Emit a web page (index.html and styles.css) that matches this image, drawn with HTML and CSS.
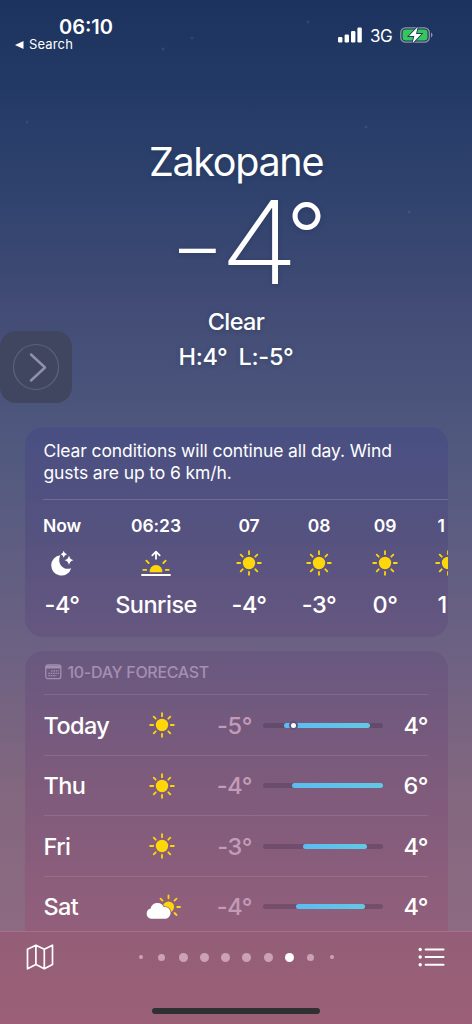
FILE: index.html
```html
<!DOCTYPE html>
<html lang="en">
<head>
<meta charset="utf-8">
<title>Weather</title>
<link rel="stylesheet" href="styles.css">
</head>
<body>
<svg class="defs" width="0" height="0" aria-hidden="true">
  <defs>
    <symbol id="sun" viewBox="0 0 26 26">
      <circle cx="13" cy="13" r="6.2" fill="#ffd60a"/>
      <path d="M13 1.2v3M13 21.8v3M1.2 13h3M21.8 13h3M4.7 4.7l2 2M19.3 19.3l2 2M21.3 4.7l-2 2M6.7 19.3l-2 2" stroke="#ffd60a" stroke-width="1.8" stroke-linecap="round"/>
    </symbol>
  </defs>
</svg>
<div class="screen">
  <header class="status">
    <div class="status-left">
      <div class="clock">06:10</div>
      <div class="back"><svg width="9" height="8" viewBox="0 0 9 8"><path d="M0 4L8.500 0v8z" fill="#fff"/></svg><span>Search</span></div>
    </div>
    <div class="status-right">
      <svg width="24" height="16" viewBox="0 0 24 16" fill="#fff"><rect x="0" y="10" width="4.400" height="5.500" rx="1.200"/><rect x="6.600" y="7.500" width="4.400" height="8" rx="1.200"/><rect x="13" y="4" width="4.400" height="11.500" rx="1.200"/><rect x="19.400" y="0.500" width="4.400" height="15" rx="1.200"/></svg>
      <span class="net">3G</span>
      <svg class="battery" width="34" height="18" viewBox="0 0 34 18"><rect x=".8" y="1.800" width="28.500" height="14.400" rx="4.800" fill="none" stroke="#8f95ac" stroke-width="1.300"/><rect x="2.600" y="3.600" width="24.900" height="10.800" rx="3.200" fill="#34c759"/><path d="M31 6.600c2 .8 2 4 0 4.800z" fill="#8f95ac"/><path d="M17.800.8L9 10h5.300L12.500 17.300 21.300 7.900H16z" fill="#fff" stroke="#20375f" stroke-width="1.800" paint-order="stroke"/></svg>
    </div>
  </header>

  <main class="content">
    <section class="hero">
      <h1 class="city">Zakopane</h1>
      <div class="temp"><span class="minus">–</span><span class="digit">4</span><span class="deg">°</span></div>
      <div class="cond">Clear</div>
      <div class="range"><span>H:4°</span><span>L:-5°</span></div>
    </section>

    <section class="card hourly">
      <p class="summary">Clear conditions will continue all day. Wind<br>gusts are up to 6 km/h.</p>
      <div class="hours">
        <div class="hour w38"><b>Now</b>
          <svg width="26" height="26" viewBox="0 0 26 26" fill="#fff"><path d="M11.300 5.200A10.200 10.200 0 1 0 22.200 18.200C14 21 7.600 13.500 11.300 5.200z"/><path d="M14.700.8Q15.300 3.700 18 4.300 15.300 4.900 14.700 7.800 14.100 4.900 11.700 4.300 14.100 3.700 14.700.8zM20 5.600Q20.800 9.500 24.500 10.300 20.800 11.100 20 15 19.200 11.100 15.600 10.300 19.200 9.500 20 5.600z"/></svg>
          <span>-4°</span></div>
        <div class="hour w82"><b>06:23</b>
          <svg width="32" height="26" viewBox="0 0 32 26" fill="none" stroke-linecap="round"><path d="M9.800 22.300a6.300 6.300 0 1 1 12.400 0z" fill="#ffd60a"/><path d="M3.300 19.900h3M25.700 19.900h3M6.300 10.600l2.400 2.400M25.700 10.600L23.300 13" stroke="#ffd60a" stroke-width="1.800"/><path d="M2 25h28M16 8.800V2M12.300 5.300L16 1.600l3.700 3.700" stroke="#fff" stroke-width="1.800" stroke-linejoin="round"/></svg>
          <span>Sunrise</span></div>
        <div class="hour w36"><b>07</b><svg width="26" height="26"><use href="#sun"/></svg><span>-4°</span></div>
        <div class="hour w36"><b>08</b><svg width="26" height="26"><use href="#sun"/></svg><span>-3°</span></div>
        <div class="hour w28"><b>09</b><svg width="26" height="26"><use href="#sun"/></svg><span>0°</span></div>
        <div class="hour w30"><b>1</b><svg width="26" height="26"><use href="#sun"/></svg><span>1</span></div>
      </div>
    </section>

    <section class="card daily">
      <h2 class="daily-head"><svg width="17" height="16" viewBox="0 0 17 16"><rect x=".8" y=".8" width="15" height="13.800" rx="2.200" fill="none" stroke="#a58fb0" stroke-width="1.300"/><path d="M1 1.500h14.600v3H1z" fill="#a58fb0"/><path d="M6 6.900h8M3.300 9.300H14M3.300 11.700h8" stroke="#a58fb0" stroke-width="1.300" stroke-dasharray="1.600 .8"/></svg><span>10-DAY FORECAST</span></h2>
      <div class="day"><span class="name">Today</span><svg class="wx" width="26" height="26"><use href="#sun"/></svg><span class="lo">-5°</span>
        <div class="track"><i class="bar" style="left:21px;width:86px"></i><i class="now" style="left:26px"></i></div><span class="hi">4°</span></div>
      <div class="day"><span class="name">Thu</span><svg class="wx" width="26" height="26"><use href="#sun"/></svg><span class="lo">-4°</span>
        <div class="track"><i class="bar" style="left:29px;width:91px"></i></div><span class="hi">6°</span></div>
      <div class="day"><span class="name">Fri</span><svg class="wx" width="26" height="26"><use href="#sun"/></svg><span class="lo">-3°</span>
        <div class="track"><i class="bar" style="left:40px;width:64px"></i></div><span class="hi">4°</span></div>
      <div class="day"><span class="name">Sat</span>
        <svg class="wx" width="36" height="26" viewBox="0 0 36 26"><circle cx="23.500" cy="13" r="5.600" fill="#ffd60a"/><path d="M23.500 1.500v2.800M15.500 4.600l2 2M31.500 4.600l-2 2M32.200 13h2.800M29.500 19l2 2" stroke="#ffd60a" stroke-width="1.800" stroke-linecap="round"/><path d="M6.300 24.700a5.200 5.200 0 0 1-.7-10.200 7 7 0 0 1 13.200-1.500 5.900 5.900 0 1 1 .3 11.700z" fill="#fff" stroke="#8d5f7c" stroke-width="1.400" paint-order="stroke"/></svg>
        <span class="lo">-4°</span>
        <div class="track"><i class="bar" style="left:33px;width:69px"></i></div><span class="hi">4°</span></div>
    </section>
  </main>

  <footer class="toolbar">
    <div class="tools">
      <svg width="28" height="26" viewBox="0 0 28 26" fill="none" stroke="#fff" stroke-width="1.700" stroke-linejoin="round"><path d="M1.500 5.200L9.900 1.200l8.400 4L26.500 1.200v19.300l-8.200 4.300-8.400-4.300-8.400 4.300zM9.900 1.200v19.300M18.300 5.200v19.600"/></svg>
      <div class="dots"><i class="xs"></i><i class="sm"></i><i></i><i></i><i></i><i></i><i></i><i class="on"></i><i class="sm"></i><i class="xs"></i></div>
      <svg width="28" height="20" viewBox="0 0 28 20" fill="none" stroke="#fff" stroke-linecap="round"><path d="M7.600 2.500h18M7.600 10h18M7.600 17.700h18" stroke-width="1.900"/><g fill="#fff" stroke="none"><circle cx="2.200" cy="2.500" r="1.700"/><circle cx="2.200" cy="10" r="1.700"/><circle cx="2.200" cy="17.700" r="1.700"/></g></svg>
    </div>
    <div class="home"></div>
  </footer>

  <div class="assist"><svg width="48" height="48" viewBox="0 0 48 48" fill="none"><circle cx="24" cy="24" r="22.500" stroke="#5b6080" stroke-width="1.200"/><path d="M19 11.500L33 24.500 19 37.500" stroke="#9092aa" stroke-width="2.400" stroke-linecap="round" stroke-linejoin="round"/></svg></div>
</div>
</body>
</html>
```
FILE: styles.css
```css
* { box-sizing: border-box; }
body { margin: 0; font-family: Inter, "Liberation Sans", sans-serif; color: #fff; }
.defs { position: absolute; }
h1, h2, p { margin: 0; font-weight: 400; }
svg { display: block; flex: none; }

.screen {
  position: relative;
  display: flex;
  flex-direction: column;
  width: 472px;
  height: 1024px;
  overflow: hidden;
  background:
    radial-gradient(circle at 163px 49px, #3e5680 0, transparent 2px),
    radial-gradient(circle at 308px 22px, #36507b 0, transparent 2px),
    radial-gradient(circle at 192px 38px, #304b77 0, transparent 2px),
    radial-gradient(circle at 366px 127px, #405684 0, transparent 2px),
    radial-gradient(circle at 409px 212px, #4a5b84 0, transparent 2px),
    radial-gradient(circle at 27px 122px, #3c527f 0, transparent 2px),
    linear-gradient(#1b335e 0, #243a66 90px, #30436e 200px, #414b75 300px, #4b547b 400px, #51597f 450px, #6b6183 640px, #82677f 790px, #8d6b82 931px);
}

.status { display: flex; justify-content: space-between; height: 70px; padding: 16px 38px 0 15px; flex: none; }
.clock { height: 21px; margin-left: 44px; font-size: 20px; line-height: 22px; font-weight: 600; letter-spacing: 0; }
.back { display: flex; align-items: center; gap: 5px; height: 15px; font-size: 13px; line-height: 15px; letter-spacing: .15px; }
.status-right { display: flex; align-items: center; height: 38px; }
.net { width: 24px; margin: 0 6px 0 8px; font-size: 17px; line-height: 24px; padding-top: 1px; letter-spacing: -.4px; }

.content { display: flex; flex-direction: column; height: 860.5px; overflow: hidden; flex: none; }
.hero { display: flex; flex-direction: column; align-items: center; height: 357px; padding-top: 67px; flex: none; text-shadow: 0 1px 5px rgba(20, 30, 60, .25); }
.city { font-size: 39.5px; line-height: 50px; letter-spacing: -1.3px; }
.temp { display: flex; height: 111px; margin-left: 28px; font-size: 116px; line-height: 111px; font-weight: 200; }
.minus { width: 49px; font-size: 68px; font-weight: 300; line-height: 121px; transform: translateX(5px) scaleX(1.08); }
.digit { width: 66px; transform: translateX(-1.5px) scaleX(1.12); }
.deg { width: 34px; font-size: 88px; line-height: 97px; font-weight: 300; transform: translateX(-4px); }
.cond { margin-top: 9px; font-size: 23.5px; line-height: 30px; font-weight: 500; letter-spacing: -.6px; }
.range { display: flex; gap: 11px; margin-top: 5px; font-size: 23.5px; line-height: 30px; font-weight: 500; letter-spacing: -.3px; }

.card { width: 423px; margin-left: 25px; border-radius: 18px; overflow: hidden; flex: none; }
.hourly { height: 210px; padding: 13px 0 0 18px; background: linear-gradient(#494f82, #55527f 50%, #665780); }
.summary { height: 60px; padding-left: .5px; font-size: 17.5px; line-height: 21.5px; letter-spacing: -.11px; border-bottom: 1px solid rgba(255, 255, 255, .17); }
.hours { display: flex; gap: 34px; padding-top: 14px; }
.hour { display: flex; flex-direction: column; align-items: center; flex: none; white-space: nowrap; }
.hour b { height: 24px; margin-bottom: 12px; font-size: 17.500px; line-height: 24px; font-weight: 600; letter-spacing: -.1px; }
.hour span { height: 30px; margin-top: 13px; font-size: 23.500px; line-height: 31px; font-weight: 500; letter-spacing: -.5px; }
.w38 { width: 38px; }
.w82 { width: 82px; }
.w36 { width: 36px; }
.w28 { width: 28px; }
.w30 { width: 30px; }
.w30 b, .w30 span { align-self: flex-start; margin-left: 4.5px; }

.daily { height: 300px; margin-top: 14px; padding: 0 20px 0 18.5px; background: linear-gradient(#68587f, #7f5b7c 140px, #925f7b 280px); }
.daily-head { display: flex; align-items: center; gap: 6px; height: 43px; padding: 0 0 1px 1px; font-size: 16px; color: #a58fb0; font-weight: 500; letter-spacing: -.3px; }
.day { display: flex; align-items: center; height: 60.5px; padding-top: 1px; border-top: 1px solid rgba(255, 255, 255, .11); font-size: 23.5px; font-weight: 500; }
.name { width: 100.5px; letter-spacing: -.6px; }
.wx { margin-left: 5px; margin-right: 33px; }
.wx[width="36"] { margin-left: 1px; margin-right: 27px; }
.lo { width: 44px; text-align: right; color: #c29bb9; letter-spacing: -.4px; }
.track { position: relative; width: 120px; height: 5px; margin-left: 11px; border-radius: 3px; background: rgba(70, 50, 80, .35); }
.bar, .now { position: absolute; top: 0; height: 5px; border-radius: 3px; }
.bar { background: linear-gradient(90deg, #5bbcf2, #62c8e4); }
.now { top: -2px; width: 9px; height: 9px; border: 2px solid #62527b; border-radius: 50%; background: #fff; }
.hi { flex: 1; text-align: right; letter-spacing: -.5px; }

.toolbar { display: flex; flex-direction: column; align-items: center; height: 93.5px; border-top: 1px solid #a37188; background: linear-gradient(#945e78, #9b6076); }
.tools { display: flex; align-items: center; justify-content: space-between; width: 472px; height: 51px; padding: 0 26px; }
.dots { display: flex; margin-left: .5px; }
.dots i { width: 9px; height: 9px; margin: 0 6.120px; border-radius: 50%; background: #cba1b8; }
.dots .sm { width: 7px; height: 7px; margin: 1px 7.120px; }
.dots .xs { width: 4px; height: 4px; margin: 2.500px 8.620px; }
.dots .on { background: #fff; }
.home { width: 168px; height: 6px; margin-top: 25.5px; border-radius: 3px; background: #303033; }

.assist { position: absolute; left: 0; top: 331px; display: flex; align-items: center; justify-content: center; width: 72px; height: 72px; border-radius: 16px; background: #414660; }
```
